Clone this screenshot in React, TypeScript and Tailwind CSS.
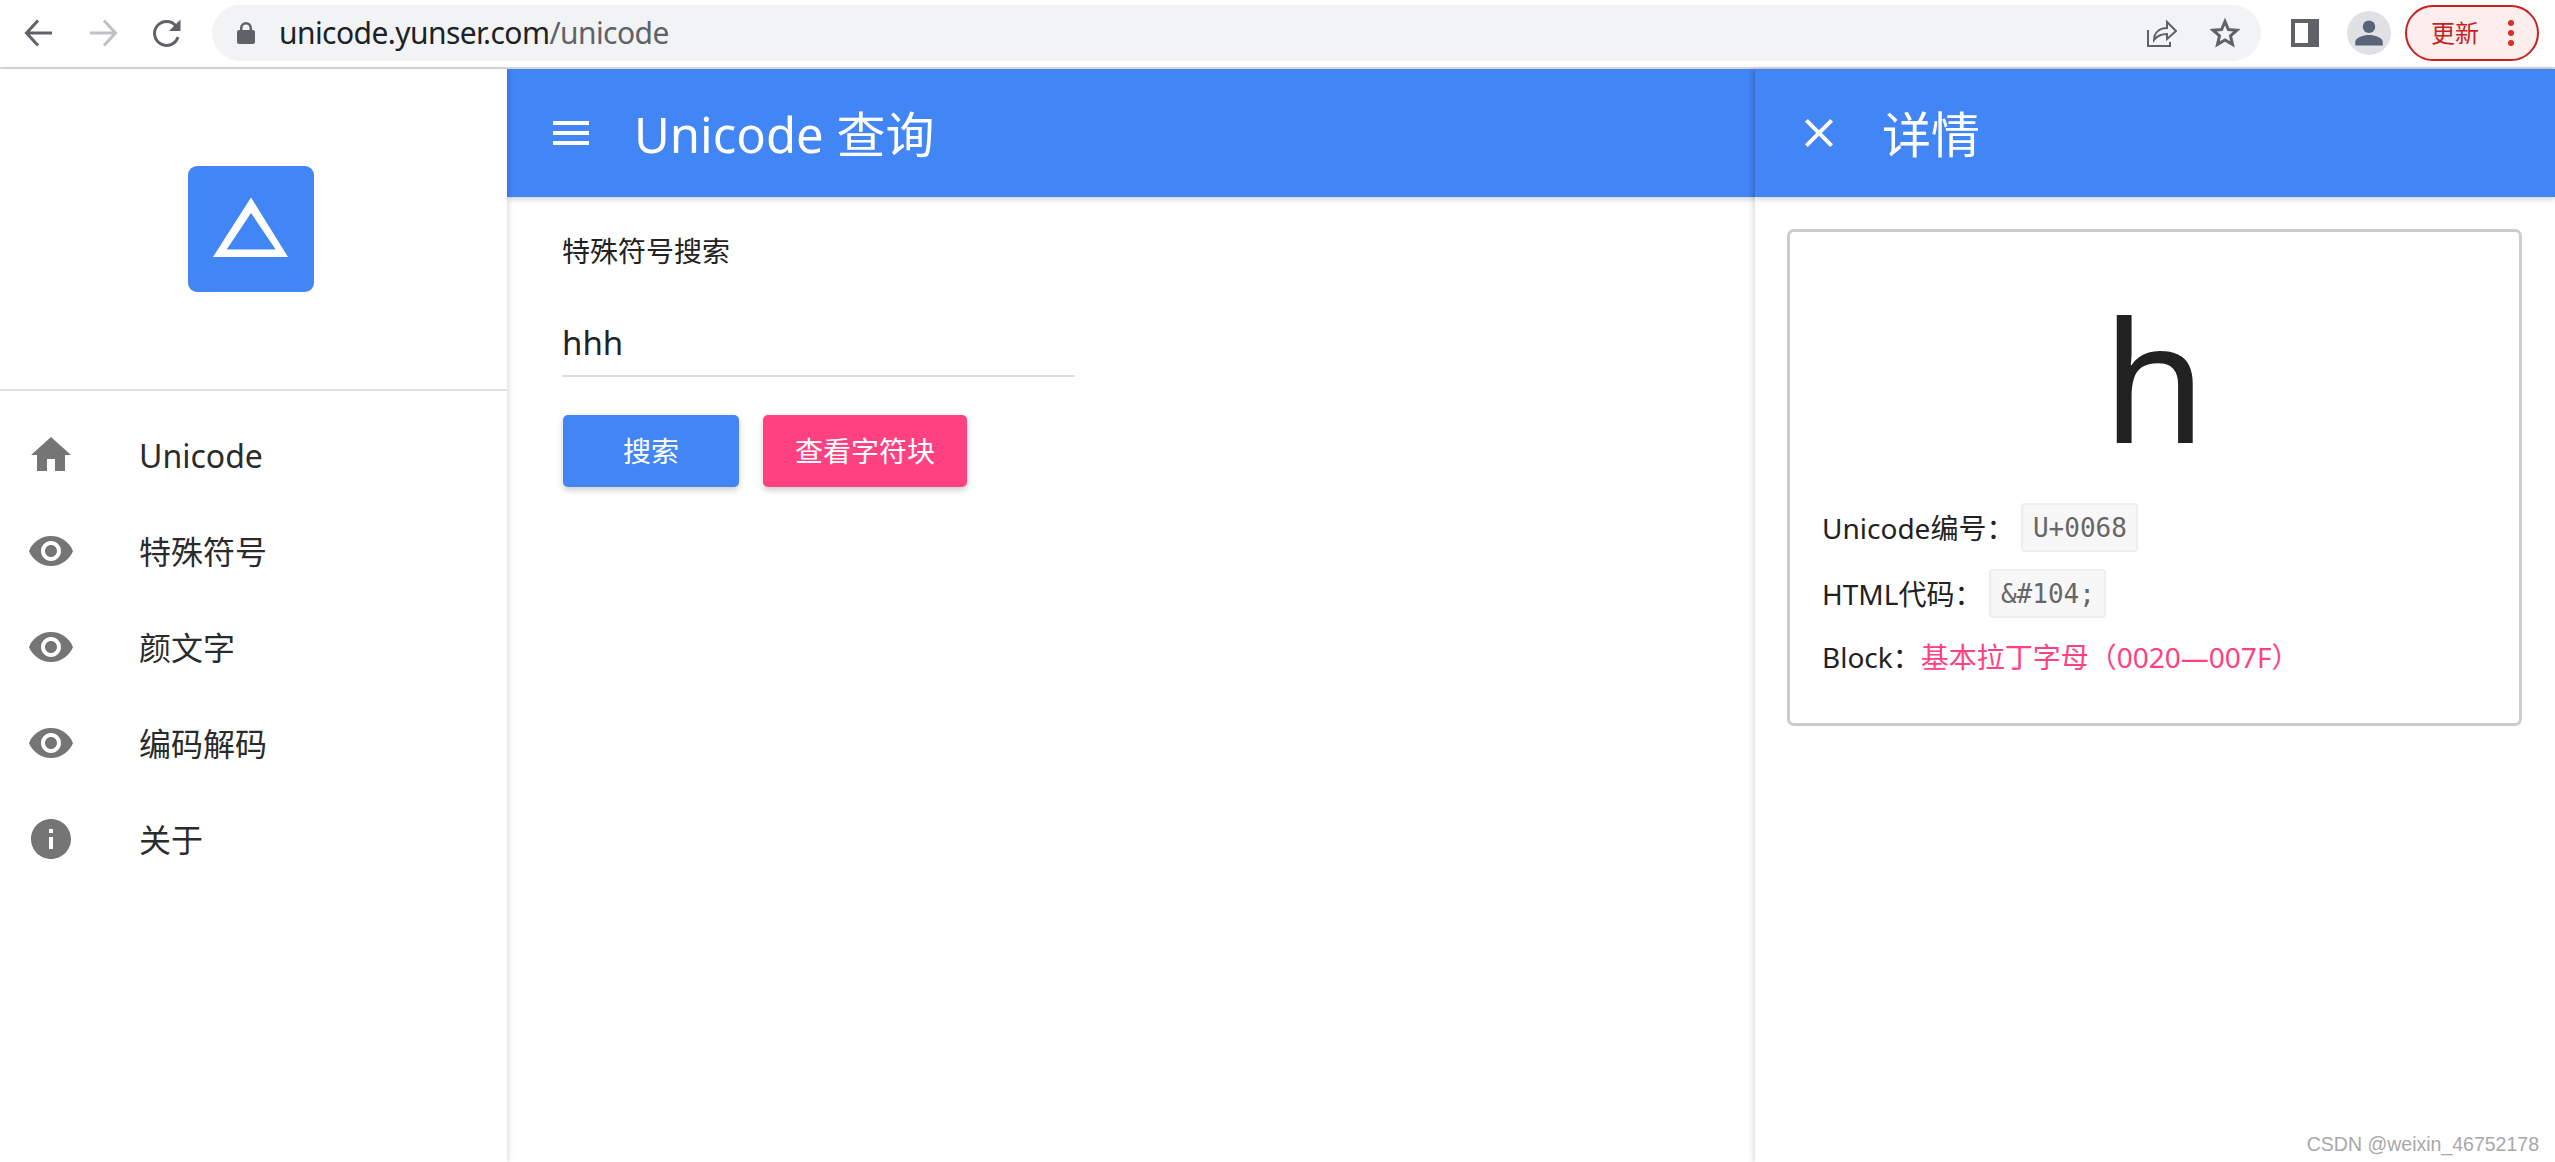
import React from "react";

const EYE = "M12 4.5C7 4.5 2.73 7.61 1 12c1.73 4.39 6 7.5 11 7.5s9.27-3.11 11-7.5c-1.73-4.39-6-7.5-11-7.5zM12 17c-2.76 0-5-2.24-5-5s2.24-5 5-5 5 2.24 5 5-2.24 5-5 5zm0-8c-1.66 0-3 1.34-3 3s1.34 3 3 3 3-1.34 3-3-1.34-3-3-3z";
const HOME = "M10 20v-6h4v6h5v-8h3L12 3 2 12h3v8z";
const INFO = "M12 2C6.48 2 2 6.48 2 12s4.48 10 10 10 10-4.48 10-10S17.52 2 12 2zm1 15h-2v-6h2v6zm0-8h-2V7h2v2z";

function MIcon({ d, className }: { d: string; className: string }) {
  return (
    <svg viewBox="0 0 24 24" className={className} fill="currentColor">
      <path d={d} />
    </svg>
  );
}

const NAV = [
  { icon: HOME, label: "Unicode" },
  { icon: EYE, label: "特殊符号" },
  { icon: EYE, label: "颜文字" },
  { icon: EYE, label: "编码解码" },
  { icon: INFO, label: "关于" },
];

function ChromeBar() {
  return (
    <div className="h-[69px] shrink-0 flex items-center border-b-2 border-[#dcdcdc] bg-white pb-[5px] pt-[3px]">
      <svg viewBox="0 0 32 32" className="w-[32px] h-[32px] ml-[23px] text-[#5f6368]" fill="none" stroke="currentColor" strokeWidth="3">
        <path d="M29 16H5M15 3.5 3.5 16 15 28.500" />
      </svg>
      <svg viewBox="0 0 32 32" className="w-[32px] h-[32px] ml-[32px] text-[#bdc1c6]" fill="none" stroke="currentColor" strokeWidth="3">
        <path d="M3 16h24M17 3.500 28.500 16 17 28.500" />
      </svg>
      <svg viewBox="0 0 32 32" className="w-[32px] h-[32px] ml-[32px] text-[#5f6368]" fill="none" stroke="currentColor" strokeWidth="3">
        <path d="M27 20a12 12 0 1 1-2-11" />
        <path d="M29.500 2.500V14H18z" fill="currentColor" stroke="none" />
      </svg>
      <div className="ml-[29px] w-[2049px] h-[56px] rounded-full bg-[#f1f3f4] flex items-center pl-[25px]">
        <svg viewBox="0 0 18 22" className="w-[18px] h-[22px] text-[#5f6368]" fill="currentColor">
          <path d="M3 8V6a6 6 0 0 1 12 0v2h1a2 2 0 0 1 2 2v10a2 2 0 0 1-2 2H2a2 2 0 0 1-2-2V10a2 2 0 0 1 2-2zm2.500 0h7V6a3.500 3.500 0 0 0-7 0z" />
        </svg>
        <div className="ml-[24px] text-[30px] leading-[40px] whitespace-nowrap tracking-[-0.57px]">
          <span className="text-[#202124]">unicode.yunser.com</span>
          <span className="text-[#5f6368]">/unicode</span>
        </div>
        <svg viewBox="0 0 30 28" className="w-[30px] h-[28px] ml-auto text-[#5f6368]" fill="none" stroke="currentColor" strokeWidth="2">
          <path d="M1 11v16h22v-4" />
          <path d="M7 21c0-7 5-12 13-12V3l9 9-9 8v-5c-6 0-10 2-13 6z" />
        </svg>
        <svg viewBox="0 0 30 30" className="w-[30px] h-[30px] ml-[33px] mr-[21px] text-[#5f6368]" fill="none" stroke="currentColor" strokeWidth="3">
          <path d="M15 3.500l3.400 8 8.600.7-6.500 5.700 2 8.500-7.500-4.500-7.500 4.500 2-8.500L3 12.200l8.600-.7z" />
        </svg>
      </div>
      <div className="ml-[30px] w-[28px] h-[28px] border-[4px] border-r-[11px] border-[#5f6368] bg-white" />
      <div className="ml-[28px] w-[44px] h-[44px] rounded-full bg-[#dfe1e5] flex items-center justify-center">
        <svg viewBox="0 0 24 24" className="w-[30px] h-[30px] text-[#5a6478]" fill="currentColor">
          <circle cx="12" cy="7" r="5" />
          <path d="M1 22v-3c0-3.500 7-5.500 11-5.500s11 2 11 5.500v3z" />
        </svg>
      </div>
      <div className="ml-[14px] w-[134px] h-[56px] rounded-full border-2 border-[#c5221f] bg-[#fdeeed] flex items-center pl-[24px]">
        <span className="text-[24px] leading-[30px] text-[#c5221f]">更新</span>
        <div className="ml-[29px] flex flex-col gap-[4px]">
          <span className="w-[6px] h-[6px] rounded-full bg-[#d93025]" />
          <span className="w-[6px] h-[6px] rounded-full bg-[#d93025]" />
          <span className="w-[6px] h-[6px] rounded-full bg-[#d93025]" />
        </div>
      </div>
    </div>
  );
}

function Sidebar() {
  return (
    <aside className="relative z-10 w-[507px] shrink-0 bg-white shadow-[2px_0_5px_rgba(0,0,0,0.12)]">
      <div className="h-[322px] border-b-2 border-[#e0e0e0] flex justify-center pt-[97px] pr-[6px]">
        <div className="w-[126px] h-[126px] rounded-[9px] bg-[#4285f4] shrink-0">
          <svg viewBox="0 0 126 126" className="w-[126px] h-[126px]" fill="#fff">
            <path fillRule="evenodd" d="M63 31.500 100 91H25zM63 47 38.700 83.400H87.700z" />
          </svg>
        </div>
      </div>
      <nav className="pt-[16px]">
        {NAV.map((n) => (
          <div key={n.label} className="h-[96px] flex items-center">
            <MIcon d={n.icon} className="ml-[27px] w-[48px] h-[48px] text-[#757575]" />
            <span className="ml-[64px] mt-[2px] text-[32px] leading-[44px] text-[#2b2b2b]">{n.label}</span>
          </div>
        ))}
      </nav>
    </aside>
  );
}

function MainColumn() {
  return (
    <main className="flex-1 min-w-0 bg-white">
      <header className="h-[128px] bg-[#4285f4] flex items-center text-white shadow-[0_2px_6px_rgba(0,0,0,0.2)]">
        <MIcon d="M3 18h18v-2H3v2zm0-5h18v-2H3v2zm0-7v2h18V6H3z" className="ml-[40px] w-[48px] h-[48px]" />
        <h1 className="ml-[39px] mt-[2px] text-[49px] leading-[64px] font-normal">Unicode 查询</h1>
      </header>
      <div className="pl-[55px] pt-[33px]">
        <p className="text-[28px] leading-[42px] text-[#222]">特殊符号搜索</p>
        <div className="mt-[48px] w-[513px] h-[57px] pt-[1px] border-b-2 border-[#dedede] text-[33px] leading-[44px] text-[#222]">hhh</div>
        <div className="mt-[38px] ml-[1px] flex gap-[24px]">
          <button className="w-[176px] h-[72px] rounded-[5px] bg-[#4285f4] text-white text-[28px] shadow-[0_3px_6px_rgba(0,0,0,0.2)]">搜索</button>
          <button className="w-[204px] h-[72px] rounded-[5px] bg-[#ff4081] text-white text-[28px] shadow-[0_3px_6px_rgba(0,0,0,0.2)]">查看字符块</button>
        </div>
      </div>
    </main>
  );
}

function Code({ children }: { children: React.ReactNode }) {
  return (
    <code className="inline-flex items-center justify-center w-[117px] h-[49px] rounded-[4px] border-2 border-[#eeeeee] bg-[#f7f7f7] text-[#666] text-[26px] font-['DejaVu_Sans_Mono',monospace]">
      {children}
    </code>
  );
}

function DetailPanel() {
  return (
    <section className="relative z-20 w-[800px] shrink-0 bg-white shadow-[-2px_0_5px_rgba(0,0,0,0.14)]">
      <header className="h-[128px] bg-[#4285f4] flex items-center text-white shadow-[0_2px_6px_rgba(0,0,0,0.2)]">
        <MIcon d="M19 6.410 17.590 5 12 10.590 6.410 5 5 6.410 10.590 12 5 17.590 6.410 19 12 13.410 17.590 19 19 17.590 13.410 12z" className="ml-[40px] w-[48px] h-[48px]" />
        <h2 className="ml-[39px] mt-[2px] text-[49px] leading-[64px] font-normal">详情</h2>
      </header>
      <div className="ml-[32px] mr-[33px] mt-[32px] h-[497px] rounded-[7px] border-[3px] border-[#cccccc]">
        <div className="h-[259px] pt-[26px] text-center text-[168px] leading-[240px] text-[#212121]">h</div>
        <div className="pl-[32px] text-[28px] leading-[40px] text-[#222]">
          <div className="flex items-center h-[49px] mt-[12px]">
            <span>Unicode编号：</span>
            <span className="ml-[7px]"><Code>U+0068</Code></span>
          </div>
          <div className="flex items-center h-[49px] mt-[17px]">
            <span>HTML代码：</span>
            <span className="ml-[7px]"><Code>&amp;#104;</Code></span>
          </div>
          <div className="mt-[19px] whitespace-nowrap">
            Block：<span className="text-[#ff4081]">基本拉丁字母（0020—007F）</span>
          </div>
        </div>
      </div>
    </section>
  );
}

export default function App() {
  return (
    <div className="relative h-[1162px] w-[2555px] overflow-hidden flex flex-col bg-white font-['Noto_Sans','Noto_Sans_CJK_SC',sans-serif]">
      <ChromeBar />
      <div className="flex-1 min-h-0 flex">
        <Sidebar />
        <MainColumn />
        <DetailPanel />
      </div>
      <div className="absolute z-30 right-[16px] bottom-[5px] text-[19.5px] leading-[26px] text-[#a8a8a8] font-['Liberation_Sans',sans-serif]">
        CSDN @weixin_46752178
      </div>
    </div>
  );
}
